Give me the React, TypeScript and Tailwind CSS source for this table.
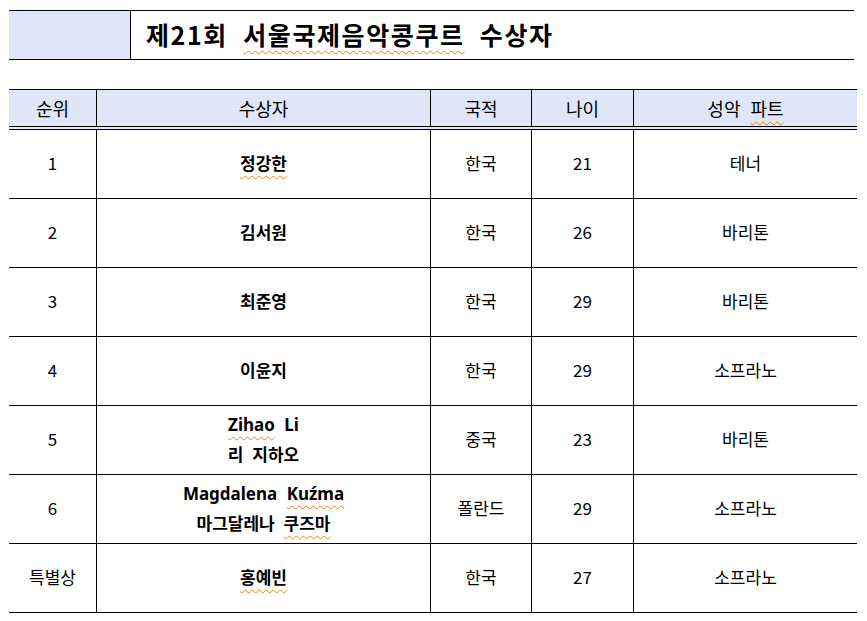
const FONT = "font-['Malgun_Gothic','Noto_Sans_CJK_KR','Noto_Sans',sans-serif]";
const LATIN = "font-['Noto_Sans','Noto_Sans_CJK_KR',sans-serif]";

const squiggle = "underline decoration-wavy decoration-[#e8830c] decoration-1 underline-offset-[5px]";

type Winner = {
  rank: string;
  names: { text: string; typo?: string[]; latin?: boolean }[];
  country: string;
  age: string;
  part: string;
};

const winners: Winner[] = [
  { rank: "1", names: [{ text: "정강한", typo: ["정강한"] }], country: "한국", age: "21", part: "테너" },
  { rank: "2", names: [{ text: "김서원" }], country: "한국", age: "26", part: "바리톤" },
  { rank: "3", names: [{ text: "최준영" }], country: "한국", age: "29", part: "바리톤" },
  { rank: "4", names: [{ text: "이윤지" }], country: "한국", age: "29", part: "소프라노" },
  {
    rank: "5",
    names: [{ text: "Zihao Li", typo: ["Zihao"], latin: true }, { text: "리 지하오" }],
    country: "중국",
    age: "23",
    part: "바리톤",
  },
  {
    rank: "6",
    names: [
      { text: "Magdalena Ku\u017Ama", typo: ["Ku\u017Ama"], latin: true },
      { text: "마그달레나 쿠즈마", typo: ["쿠즈마"] },
    ],
    country: "폴란드",
    age: "29",
    part: "소프라노",
  },
  { rank: "특별상", names: [{ text: "홍예빈", typo: ["홍예빈"] }], country: "한국", age: "27", part: "소프라노" },
];

const grid = "grid grid-cols-[87px_334px_101px_102px_224px]";

function Words({ text, typo = [], latin }: { text: string; typo?: string[]; latin?: boolean }) {
  const words = text.split(" ");
  return (
    <span className={`[word-spacing:5px] ${latin ? LATIN : ""}`}>
      {words.map((w, i) => (
        <span key={i}>
          <span className={typo.includes(w) ? squiggle : ""}>{w}</span>
          {i < words.length - 1 ? " " : ""}
        </span>
      ))}
    </span>
  );
}

export default function App() {
  return (
    <div className={`w-[867px] h-[621px] bg-white text-black ${FONT}`}>
      <div className="ml-[9px] pt-[10px]">
        <div className="flex h-[50px] w-[845px] border-y border-black">
          <div className="w-[122px] bg-[#dfe6f7] border-r border-black" />
          <div className="flex items-center pl-[15px] text-[25px] font-bold tracking-[1.6px] [word-spacing:8px]">
            <span>
              제21회 <span className={squiggle}>서울국제음악콩쿠르</span> 수상자
            </span>
          </div>
        </div>

        <div className="mt-[29px] w-[848px]">
          <div className={`${grid} h-[41px] bg-[#dfe6f7] border-t border-b-4 border-double border-black text-[18px]`}>
            <div className="flex items-center justify-center">순위</div>
            <div className="flex items-center justify-center border-l border-black">수상자</div>
            <div className="flex items-center justify-center border-l border-black">국적</div>
            <div className="flex items-center justify-center border-l border-black">나이</div>
            <div className="flex items-center justify-center border-l border-black [word-spacing:6px]">
              <span>
                성악 <span className={squiggle}>파트</span>
              </span>
            </div>
          </div>

          {winners.map((w) => (
            <div key={w.rank} className={`${grid} h-[69px] border-b border-black text-[17px]`}>
              <div className="flex items-center justify-center pb-[3px]">{w.rank}</div>
              <div className="flex flex-col items-center justify-center gap-[6px] pb-[3px] border-l border-black font-bold leading-[23px]">
                {w.names.map((n) => (
                  <Words key={n.text} text={n.text} typo={n.typo} latin={n.latin} />
                ))}
              </div>
              <div className="flex items-center justify-center pb-[3px] border-l border-black">{w.country}</div>
              <div className="flex items-center justify-center pb-[3px] border-l border-black">{w.age}</div>
              <div className="flex items-center justify-center pb-[3px] border-l border-black">{w.part}</div>
            </div>
          ))}
        </div>
      </div>
    </div>
  );
}
